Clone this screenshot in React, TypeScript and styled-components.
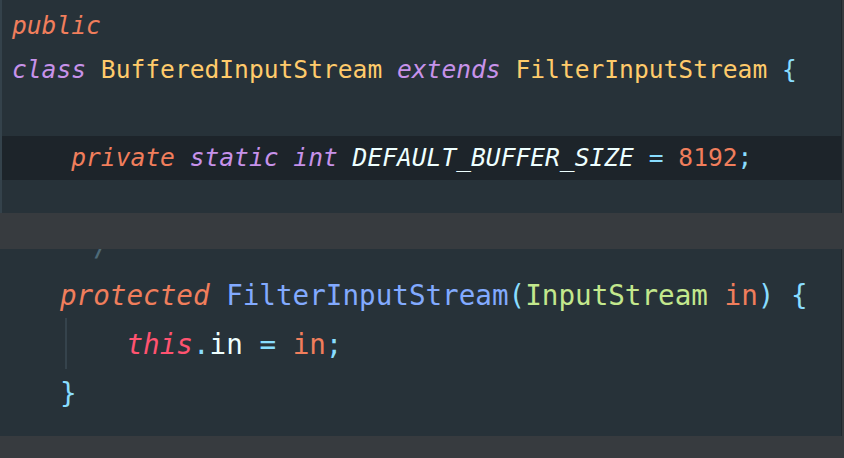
import React from "react";
import styled, { createGlobalStyle } from "styled-components";

const Global = createGlobalStyle`
  html, body { margin: 0; padding: 0; background: #373b3f; }
  #root { width: 844px; height: 458px; overflow: hidden; }
`;

const Page = styled.div`
  width: 844px;
  height: 458px;
  background: #373b3f;
  display: flex;
  flex-direction: column;
  gap: 36px;
`;

const Panel = styled.div<{ $h: number; $fs: number; $lh: number; $padTop: number; $padLeft: number; $edge?: boolean }>`
  box-sizing: border-box;
  width: 842px;
  height: ${(p) => p.$h}px;
  background: #273239;
  border-right: 1px solid #20282e;
  ${(p) => (p.$edge ? "border-left: 2px solid #34424b;" : "")}
  padding-top: ${(p) => p.$padTop}px;
  overflow: hidden;
  display: flex;
  flex-direction: column;
  font-family: "DejaVu Sans Mono", "Liberation Mono", monospace;
  font-size: ${(p) => p.$fs}px;
  line-height: ${(p) => p.$lh}px;
  --pad-left: ${(p) => p.$padLeft}px;
  --lh: ${(p) => p.$lh}px;
`;

const Line = styled.div<{ $indent: number; $active?: boolean }>`
  position: relative;
  height: var(--lh);
  flex: none;
  white-space: pre;
  padding-left: calc(var(--pad-left) + ${(p) => p.$indent}ch);
  background: ${(p) => (p.$active ? "#1d242a" : "transparent")};
  color: #eeffff;
`;

/* A line scrolled partly out of view at the top of the panel */
const ScrolledLine = styled(Line)<{ $hidden: number }>`
  margin-top: -${(p) => p.$hidden}px;
`;

const Guide = styled.span`
  position: absolute;
  left: calc(var(--pad-left) + 5px);
  top: -2px;
  bottom: 0;
  width: 2px;
  background: #35434c;
`;

const T = styled.span<{ $c: string; $i?: boolean }>`
  color: ${(p) => p.$c};
  font-style: ${(p) => (p.$i ? "italic" : "normal")};
`;

const C = {
  mod: "#f07e5c",
  kw: "#c792ea",
  type: "#ffcb6b",
  punc: "#89ddff",
  text: "#eeffff",
  num: "#f07e5c",
  fn: "#82aaff",
  param: "#c3e88d",
  self: "#ff5370",
  comment: "#4e6a78",
};

export default function App() {
  return (
    <>
      <Global />
      <Page>
        <Panel $h={213} $fs={24.6} $lh={44} $padTop={4} $padLeft={10} $edge>
          <Line $indent={0}>
            <T $c={C.mod} $i>public</T>
          </Line>
          <Line $indent={0}>
            <T $c={C.kw} $i>class</T> <T $c={C.type}>BufferedInputStream</T>{" "}
            <T $c={C.kw} $i>extends</T> <T $c={C.type}>FilterInputStream</T>{" "}
            <T $c={C.punc}>{"{"}</T>
          </Line>
          <Line $indent={0} />
          <Line $indent={4} $active>
            <T $c={C.mod} $i>private</T> <T $c={C.kw} $i>static</T>{" "}
            <T $c={C.kw} $i>int</T> <T $c={C.text} $i>DEFAULT_BUFFER_SIZE</T>{" "}
            <T $c={C.punc}>=</T> <T $c={C.num}>8192</T>
            <T $c={C.punc}>;</T>
          </Line>
        </Panel>
        <Panel $h={187} $fs={27.6} $lh={49} $padTop={0} $padLeft={60}>
          <ScrolledLine $indent={0} $hidden={27.5}>
            <T $c={C.comment}>{" */"}</T>
          </ScrolledLine>
          <Line $indent={0}>
            <T $c={C.mod} $i>protected</T> <T $c={C.fn}>FilterInputStream</T>
            <T $c={C.punc}>(</T>
            <T $c={C.param}>InputStream</T> <T $c={C.num}>in</T>
            <T $c={C.punc}>)</T> <T $c={C.punc}>{"{"}</T>
          </Line>
          <Line $indent={4}>
            <Guide />
            <T $c={C.self} $i>this</T>
            <T $c={C.punc}>.</T>
            <T $c={C.text}>in</T> <T $c={C.punc}>=</T> <T $c={C.num}>in</T>
            <T $c={C.punc}>;</T>
          </Line>
          <Line $indent={0}>
            <T $c={C.punc}>{"}"}</T>
          </Line>
        </Panel>
      </Page>
    </>
  );
}
